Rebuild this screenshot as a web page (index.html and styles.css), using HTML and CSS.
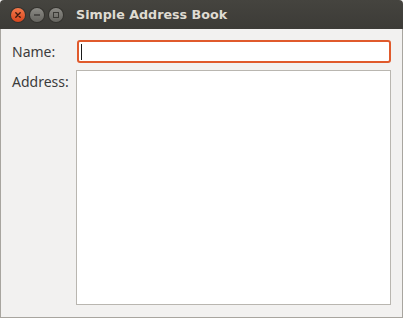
FILE: index.html
```html
<!DOCTYPE html>
<html lang="en">
<head>
    <meta charset="UTF-8">
    <title>Simple Address Book</title>
    <link rel="stylesheet" href="styles.css">
</head>
<body>
    <div class="window">
        <div class="titlebar">
            <div class="controls">
                <span class="btn close">
                    <svg width="14" height="14" viewBox="0 0 14 14"><path d="M4.8 4.8l4.4 4.4M9.2 4.8l-4.4 4.4" stroke="#3b1a10" stroke-width="1.4" stroke-linecap="round"/></svg>
                </span>
                <span class="btn">
                    <svg width="14" height="14" viewBox="0 0 14 14"><path d="M4 7h6" stroke="#3a3935" stroke-width="1.4"/></svg>
                </span>
                <span class="btn">
                    <svg width="14" height="14" viewBox="0 0 14 14"><rect x="4.5" y="4.5" width="5" height="5" fill="none" stroke="#3a3935" stroke-width="1"/></svg>
                </span>
            </div>
            <span class="title">Simple Address Book</span>
        </div>

        <div class="content">
            <div class="row">
                <label class="label">Name:</label>
                <div class="field name"><span class="caret"></span></div>
            </div>
            <div class="row grow">
                <label class="label">Address:</label>
                <div class="field address"></div>
            </div>
        </div>
    </div>
</body>
</html>
```

FILE: styles.css
```css
* {
    margin: 0;
    padding: 0;
    box-sizing: border-box;
}

body {
    width: 403px;
    height: 318px;
    font-family: "Noto Sans", "DejaVu Sans", sans-serif;
    background: #f2f1f0;
}

.window {
    width: 403px;
    height: 318px;
    display: flex;
    flex-direction: column;
    background: #f2f1f0;
}

.titlebar {
    height: 29px;
    display: flex;
    align-items: center;
    background: linear-gradient(#45443f, #3c3b37);
    border-radius: 4px 4px 0 0;
}

.controls {
    display: flex;
    gap: 5px;
    padding-left: 11px;
    width: 76px;
}

.btn {
    width: 14px;
    height: 14px;
    border-radius: 50%;
    background: linear-gradient(#8b8a85, #65645f);
    box-shadow: 0 0 0 1px #33322e;
    display: flex;
}

.btn.close {
    background: linear-gradient(#f4784a, #d8461e);
}

.title {
    color: #dfdbd2;
    font-family: "DejaVu Sans", sans-serif;
    font-weight: bold;
    font-size: 12.7px;
}

.content {
    flex: 1;
    display: flex;
    flex-direction: column;
    gap: 7px;
    padding: 11px 11px 12px 11px;
    border: 1px solid #a8a59f;
    border-top: none;
}

.row {
    display: flex;
    align-items: flex-start;
}

.row.grow {
    flex: 1;
}

.label {
    width: 64px;
    padding-top: 2px;
    font-size: 14px;
    color: #3c3c3c;
}

.field {
    flex: 1;
    background: #fff;
}

.name {
    height: 23px;
    margin-left: 1px;
    border: 2px solid #e05a2c;
    border-radius: 3px;
    padding: 2px 0 0 2px;
}

.caret {
    display: block;
    width: 1px;
    height: 16px;
    background: #1a1a1a;
}

.address {
    align-self: stretch;
    border: 1px solid #b9b6b0;
}
```
